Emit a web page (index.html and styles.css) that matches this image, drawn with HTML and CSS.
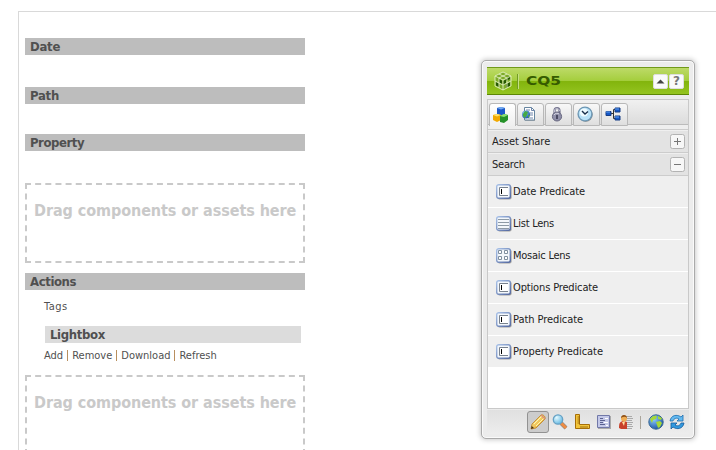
FILE: index.html
```html
<!DOCTYPE html>
<html lang="en">
<head>
<meta charset="utf-8">
<title>CQ5</title>
<link rel="stylesheet" href="styles.css">
</head>
<body>
<svg class="defs" width="0" height="0">
  <defs>
    <linearGradient id="key" x1="0" y1="0" x2="1" y2="1"><stop offset="0" stop-color="#a9c2e8"/><stop offset="1" stop-color="#52679f"/></linearGradient>
    <linearGradient id="pen" x1="0" y1="0" x2="1" y2="1"><stop offset="0" stop-color="#fff3a0"/><stop offset="1" stop-color="#e39b1c"/></linearGradient>
    <radialGradient id="glass" cx=".35" cy=".3" r=".8"><stop offset="0" stop-color="#e4faff"/><stop offset="1" stop-color="#58b2e0"/></radialGradient>
    <radialGradient id="sea" cx=".35" cy=".3" r=".8"><stop offset="0" stop-color="#8fd0ff"/><stop offset="1" stop-color="#12489f"/></radialGradient>
    <symbol id="base" viewBox="0 0 16 16">
      <rect x="1.600" y="1.600" width="14" height="14" rx="2" fill="#777" opacity=".65"/>
      <rect x=".7" y=".7" width="13.600" height="13.600" rx="2" fill="#f3f7fb" stroke="url(#key)" stroke-width="1.400"/>
    </symbol>
    <symbol id="field" viewBox="0 0 16 16"><use href="#base"/><path d="M12 3.500H3.500V11.500H12" fill="#fff" stroke="#79828e"/><path d="M5.500 5v5" stroke="#000"/></symbol>
    <symbol id="lines" viewBox="0 0 16 16"><use href="#base"/><path d="M2 3.500h11M2 6.500h11M2 9.500h11M2 12.500h11" stroke="#8d9aa6"/></symbol>
    <symbol id="mosaic" viewBox="0 0 16 16"><use href="#base"/><path d="M2.500 2.500h3v3h-3zM8.500 2.500h3v3h-3zM2.500 8.500h3v3h-3zM8.500 8.500h3v3h-3z" fill="#fff" stroke="#8090a0"/></symbol>
  </defs>
</svg>
<main class="page">
  <div class="column">
    <h2 class="bar date">Date</h2>
    <h2 class="bar path">Path</h2>
    <h2 class="bar property">Property</h2>
    <div class="drop"><span>Drag components or assets here</span></div>
    <h2 class="bar actions">Actions</h2>
    <div class="tags">Tags</div>
    <h3 class="bar lightbox">Lightbox</h3>
    <div class="links"><a>Add</a><i></i><a>Remove</a><i></i><a>Download</a><i></i><a>Refresh</a></div>
    <div class="drop"><span>Drag components or assets here</span></div>
  </div>
</main>
<aside class="sidekick">
  <header class="head">
    <svg class="logo" width="18" height="20" viewBox="0 0 18 20"><path d="M9 1 17 5v10l-8 4-8-4V5z" fill="#7dab2a"/><path d="m9 10 3-1.500v4L9 14zM12 13l4-2v4l-4 2zM12 7l4-2v3l-4 2zM2 11l3 1.500V16l-3-1.500zM5 8l3 1.500V13l-3-1.500z" fill="#275900"/><path d="M9 1 17 5v10l-8 4-8-4V5zM1 5l8 4 8-4M9 9v10M1 10l8 4 8-4M5 3l8 4v10M13 3 5 7v10" fill="none" stroke="#e3f1bf" stroke-width=".9"/></svg>
    <span class="rule"></span>
    <span class="brand">CQ5</span>
    <button class="tool"><svg width="13" height="13"><path d="M2.500 8.500h8l-4-4z" fill="#444"/></svg></button>
    <button class="tool">?</button>
  </header>
  <div class="content">
    <nav class="tabs">
      <span class="tab on"><svg width="16" height="16" viewBox="0 0 16 16"><path d="m4 1 4-1 4 1v6L8 8.500 4 7z" fill="#1c58c8"/><path d="m4 1 4-1 4 1-4 1.500z" fill="#75adf2"/><path d="m0 8 4-1 4 1v5l-4 2-4-2z" fill="#f2a900"/><path d="m0 8 4-1 4 1-4 1.500z" fill="#ffe36b"/><path d="m7 9 4-2 4 1v5l-4 3-4-1z" fill="#259128"/><path d="m7 9 4-2 4 1-4 2z" fill="#8ee174"/></svg></span>
      <span class="tab"><svg width="16" height="16" viewBox="0 0 16 16"><path d="M4 2h7l3 3v10H4z" fill="#aaa"/><path d="M3.500 1.500h7l3 3v9.500h-10z" fill="#fff" stroke="#6685a0"/><path d="M10.500 1.500v3h3M5 4h4M9 7h3M9 9h3M7 12h5" stroke="#7187ac" fill="none"/><circle cx="5" cy="8.500" r="4" fill="url(#sea)"/><path d="m2 8 2-3 3 1-1 3-2 3-2-2zM7 9h2l-2 3z" fill="#45a944"/></svg></span>
      <span class="tab"><svg width="16" height="16" viewBox="0 0 16 16"><path d="M5.500 8V5c0-4 5-4 5 0v4" fill="none" stroke="#73738d" stroke-width="2.200"/><path d="M5.500 7V5c0-3.500 4.500-3.500 5 0" fill="none" stroke="#c6c6d7"/><ellipse cx="8" cy="10.500" rx="4.600" ry="4.500" fill="#9090a9" stroke="#67677f"/><path d="M5 9c1-2 4-2 5-1" stroke="#d6d6e2" fill="none"/><path d="M8 9v4" stroke="#33334c" stroke-width="1.500"/></svg></span>
      <span class="tab"><svg width="16" height="16" viewBox="0 0 16 16"><circle cx="8.700" cy="8.700" r="7" fill="#858585"/><circle cx="8" cy="8" r="6.900" fill="#b9e2f8" stroke="#6e98b5" stroke-width="1.400"/><circle cx="7" cy="6.500" r="4" fill="#effbff"/><path d="m5 5 3 3 3-2.500" fill="none" stroke="#182f4b" stroke-width="1.400"/></svg></span>
      <span class="tab"><svg width="16" height="16" viewBox="0 0 16 16"><path d="M5 7.500h4M8.500 3.500v9M8.500 3.500h2M8.500 12.500h2" stroke="#333" fill="none"/><path d="M1 5.500h5v4H1zM10 2h5v4h-5zM10 10h5v4h-5z" fill="#1558c8" stroke="#173c83"/><path d="M1 6h4M10 3h4M10 11h4" stroke="#65a2f4"/></svg></span>
    </nav>
    <div class="group"><span>Asset Share</span><svg class="toggle" width="15" height="15"><rect x=".5" y=".5" width="14" height="14" rx="2" fill="#f7f7f7" stroke="#b3b3b3"/><path d="M4 7.500h7M7.500 4v7" stroke="#777"/></svg></div>
    <div class="group"><span class="search">Search</span><svg class="toggle" width="15" height="15"><rect x=".5" y=".5" width="14" height="14" rx="2" fill="#f7f7f7" stroke="#b3b3b3"/><path d="M4 7.500h7" stroke="#777"/></svg></div>
    <ul class="items">
      <li><svg width="16" height="16"><use href="#field"/></svg><span>Date Predicate</span></li>
      <li><svg width="16" height="16"><use href="#lines"/></svg><span class="list">List Lens</span></li>
      <li><svg width="16" height="16"><use href="#mosaic"/></svg><span class="list">Mosaic Lens</span></li>
      <li><svg width="16" height="16"><use href="#field"/></svg><span class="options">Options Predicate</span></li>
      <li><svg width="16" height="16"><use href="#field"/></svg><span>Path Predicate</span></li>
      <li><svg width="16" height="16"><use href="#field"/></svg><span>Property Predicate</span></li>
    </ul>
  </div>
  <footer class="foot">
    <span class="mode on"><svg width="16" height="16" viewBox="0 0 16 16"><path d="m1 15 1-5L11 1c2-1 5 2 4 4L6 14z" fill="url(#pen)" stroke="#b98028" stroke-width=".8"/><path d="m4 10 8-8M6 12l8-8" stroke="#fff7ad"/><path d="m1 15 .7-3 2.300 2z" fill="#463119"/><path d="m11 1 4 4" stroke="#d98f7b" stroke-width="1.500"/></svg></span>
    <span class="mode"><svg width="16" height="16" viewBox="0 0 16 16"><path d="m9 9 5 5" stroke="#888" stroke-width="4"/><path d="m9 9 5 5" stroke="#ef8c42" stroke-width="3"/><circle cx="6" cy="5.500" r="4.700" fill="url(#glass)" stroke="#66a1c4" stroke-width="1.300"/></svg></span>
    <span class="mode"><svg width="16" height="16" viewBox="0 0 16 16"><path d="M1.500.500h4v10h10v4h-14z" fill="#f2c43a" stroke="#a66e08"/><path d="M3.500 3h2M3.500 5h2M3.500 7h2M3.500 9h2M7 12v2M9 12v2M11 12v2M13 12v2" stroke="#8c5b0a" stroke-width=".8"/></svg></span>
    <span class="mode"><svg width="16" height="16" viewBox="0 0 16 16"><path d="M2 2h13v13H2z" fill="#aaa"/><path d="M1.500 1.500h12v12h-12z" fill="#c3c8e8" stroke="#7178a8"/><path d="M4 4.500h3M4 6.500h5M4 8.500h3M4 10.500h5" stroke="#5a6190"/><path d="M9 4.500h3M8 8.500h4M10 11.500h2" stroke="#fff"/></svg></span>
    <span class="mode"><svg width="16" height="16" viewBox="0 0 16 16"><path d="M8 2.500h6M8 4.500h7M8 6.500h6M8 8.500h7M8 10.500h6M8 12.500h7M8 14.500h6" stroke="#aaa"/><path d="M1 14c0-5 1-7 5-7l3 1v7H3z" fill="#c8412a"/><path d="m4 8 2 4 1-5z" fill="#ffe0a0"/><circle cx="6" cy="4.500" r="3" fill="#efad53"/><path d="M3 4c0-4 6-4 6 0-2-2-4-1-6 0" fill="#8b4e16"/></svg></span>
    <span class="divider"></span>
    <span class="mode globe"><svg width="16" height="16" viewBox="0 0 16 16"><circle cx="8" cy="8" r="7.200" fill="url(#sea)" stroke="#386793"/><path d="M2 5c2-3 5-4 7-3L8 5 5 6 4 9zM8 8l4-1 2 2-2 4-2 1-1-3zM10 2l4 2-1 2-3-1z" fill="#a5d838"/></svg></span>
    <span class="mode refresh"><svg width="16" height="16" viewBox="0 0 16 16"><path d="M1 7c1-6 7-7 11-4l2-2v6H8l2-2C8 3.500 5 4 4 7z" fill="#64baf0" stroke="#1d6daf" stroke-width=".8"/><path d="M15 9c-1 6-7 7-11 4l-2 2V9h6l-2 2c2 1.500 5 1 6-2z" fill="#3199df" stroke="#165b9b" stroke-width=".8"/></svg></span>
  </footer>
</aside>
</body>
</html>
```
FILE: styles.css
```css
* { box-sizing: border-box; }
body { margin: 0; height: 450px; overflow: hidden; background: #fff; font-family: "DejaVu Sans Condensed", "DejaVu Sans", sans-serif; }
.defs { position: absolute; }
.page { margin: 11px 0 0 18px; height: 439px; padding: 26px 0 0 6px; border: 1px solid #d9d9d9; border-width: 1px 0 0 1px; overflow: hidden; }
.column { width: 280px; }
.bar { margin: 0; height: 17px; padding-left: 5px; background: #bdbdbd; color: #505050; font: bold 13px/17px "DejaVu Sans Condensed"; letter-spacing: -.25px; }
.date { margin-bottom: 32px; }
.path { margin-bottom: 30px; }
.property { margin-bottom: 32px; letter-spacing: -.45px; }
.drop { height: 80px; border: 2px dashed #c9c9c9; padding: 16px 0 0 7px; color: #c9c9c9; font: bold 16px/20px "DejaVu Sans Condensed"; letter-spacing: -.07px; white-space: nowrap; }
.actions { margin-top: 10px; letter-spacing: -.4px; }
.tags { height: 36px; padding: 9px 0 0 19px; color: #505050; font-size: 11px; line-height: 16px; letter-spacing: .5px; }
.lightbox { margin: 0 4px 0 20px; background: #dcdcdc; letter-spacing: -.35px; }
.links { height: 32px; padding: 5px 0 0 19px; display: flex; color: #505050; font-size: 11px; line-height: 15px; }
.links i { width: 1px; height: 11px; margin: 2px 4px 0; background: #b8905f; }
.sidekick { position: absolute; left: 481px; top: 60px; width: 214px; height: 379px; padding: 6px 5px 5px; background: #ececec; border: 1px solid #aaa; border-radius: 5px; box-shadow: inset 0 0 0 1px #fafafa, 0 0 5px 1px #ccc; }
.head { height: 28px; display: flex; align-items: center; padding: 0 5px 0 7px; background: linear-gradient(#bdda68 0, #a5ce3e 48%, #82b40c 50%, #94c420 100%); border-top: 1px solid #719a19; border-bottom: 1px solid #5c8605; }
.rule { width: 2px; height: 15px; margin: 0 7px 0 5px; border-left: 1px solid #729b25; border-right: 1px solid #c5df83; }
.brand { width: 37px; color: #365b00; font: bold 12px/16px "DejaVu Sans"; transform: scaleX(1.28); transform-origin: left; margin-right: auto; }
.tool { display: flex; width: 15px; height: 15px; margin-left: 1px; padding: 0; align-items: center; justify-content: center; border: 1px solid #ddd; border-radius: 2px; background: #fafafa; color: #777; font: bold 12px/13px "DejaVu Sans"; }
.content { height: 310px; margin-top: 4px; border: 1px solid #c9c9c9; background: #fff; }
.tabs { height: 30px; display: flex; gap: 1px; padding: 3px 0 0 1px; border-bottom: 1px solid #ccc; background: linear-gradient(#f0f0f0, #dcdcdc 24px, #bbb 24px, #bbb 25px, #eee 25px); }
.tab { width: 27px; height: 23px; display: grid; place-items: center; border: 1px solid #b8b8b8; border-radius: 3px 3px 0 0; background: linear-gradient(#f8f8f8, #dedede); }
.tab svg { margin: -1px 0 0 -3px; }
.tab.on { background: linear-gradient(#fff, #efefef); border-bottom: 0; }
.group { height: 23px; display: flex; align-items: center; justify-content: space-between; padding: 0 3px 0 4px; background: #e3e3e3; border-top: 1px solid #efefef; border-bottom: 1px solid #ccc; color: #222; font-size: 11px; line-height: 16px; letter-spacing: -.05px; }
.search { letter-spacing: -.2px; }
.items { margin: 0; padding: 0; list-style: none; }
.items li { height: 32px; display: flex; align-items: center; padding-left: 8px; gap: 1px; background: #efefef; border-bottom: 1px solid #fff; color: #222; font-size: 11px; letter-spacing: -.07px; }
.items .list { letter-spacing: -.25px; }
.items .options { letter-spacing: -.15px; }
.foot { height: 24px; margin-top: 1px; display: flex; align-items: center; padding: 0 0 0 40px; background: linear-gradient(#e0e0e0, #ededed); }
.mode { width: 22px; height: 22px; display: grid; place-items: center; }
.mode.on { background: #ccc; border: 1px solid #929292; border-radius: 3px; }
.divider { width: 1px; height: 13px; margin: 0 4px 0 3px; background: #aaa59b; }
.globe, .refresh { width: 21px; }
```
